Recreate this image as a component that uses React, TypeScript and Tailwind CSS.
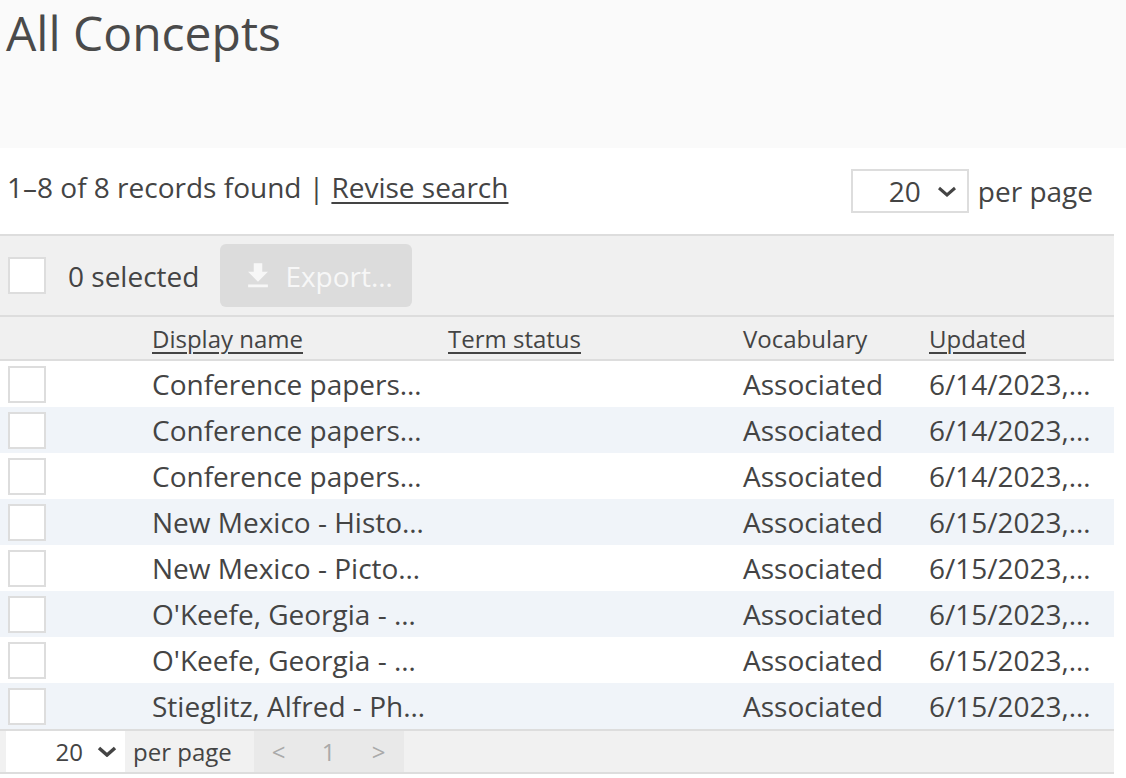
type Concept = {
  name: string;
  vocabulary: string;
  updated: string;
};

const concepts: Concept[] = [
  { name: "Conference papers…", vocabulary: "Associated", updated: "6/14/2023,…" },
  { name: "Conference papers…", vocabulary: "Associated", updated: "6/14/2023,…" },
  { name: "Conference papers…", vocabulary: "Associated", updated: "6/14/2023,…" },
  { name: "New Mexico - Histo…", vocabulary: "Associated", updated: "6/15/2023,…" },
  { name: "New Mexico - Picto…", vocabulary: "Associated", updated: "6/15/2023,…" },
  { name: "O'Keefe, Georgia - …", vocabulary: "Associated", updated: "6/15/2023,…" },
  { name: "O'Keefe, Georgia - …", vocabulary: "Associated", updated: "6/15/2023,…" },
  { name: "Stieglitz, Alfred - Ph…", vocabulary: "Associated", updated: "6/15/2023,…" },
];

function Checkbox() {
  return <div className="h-[37px] w-[38px] border-2 border-[#dddddd] bg-white" />;
}

function Chevron({ className }: { className: string }) {
  return (
    <svg viewBox="0 0 20 11" className={className} fill="none" stroke="currentColor" strokeWidth={3}>
      <polyline points="2,2 10,9 18,2" />
    </svg>
  );
}

function DownloadIcon() {
  return (
    <svg viewBox="0 0 24 24" className="h-[34px] w-[34px]" fill="currentColor">
      <path d="M19 9h-4V3H9v6H5l7 7 7-7zM5 18v2h14v-2H5z" />
    </svg>
  );
}

function SearchSummary() {
  return (
    <div className="flex h-[86px] items-center justify-between pl-[7px] pr-[21px]">
      <p className="mb-[8px] text-[28px] leading-[38px]">
        1–8 of 8 records found |{" "}
        <a className="underline decoration-2 underline-offset-[4px]">Revise search</a>
      </p>
      <div className="flex items-center gap-[9px]">
        <div className="flex h-[44px] w-[118px] items-center justify-end gap-[16px] border-2 border-[#dddddd] bg-white pr-[10px]">
          <span className="text-[28px] leading-none">20</span>
          <Chevron className="h-[11px] w-[20px]" />
        </div>
        <span className="text-[28px] leading-[38px]">per page</span>
      </div>
    </div>
  );
}

function Toolbar() {
  return (
    <div className="flex h-[83px] items-center border-y-2 border-[#dddddd] bg-[#f0f0f0] pl-[8px]">
      <Checkbox />
      <span className="ml-[22px] text-[28px] leading-[38px]">0 selected</span>
      <button
        type="button"
        disabled
        className="ml-[21px] flex h-[63px] w-[192px] items-center rounded-[6px] bg-[#dcdcdc] pl-[21px] text-[#f7f7f7]"
      >
        <DownloadIcon />
        <span className="ml-[10px] text-[28px] leading-[38px]">Export…</span>
      </button>
    </div>
  );
}

const gridCols = "grid grid-cols-[152px_296px_295px_186px_1fr]";

function HeaderRow() {
  return (
    <div className={`${gridCols} h-[44px] items-center border-b-2 border-[#dddddd] bg-[#f0f0f0] text-[24px] leading-[33px]`}>
      <div />
      <span className="underline decoration-2 underline-offset-[4px]">Display name</span>
      <span className="underline decoration-2 underline-offset-[4px]">Term status</span>
      <span>Vocabulary</span>
      <span className="underline decoration-2 underline-offset-[4px]">Updated</span>
    </div>
  );
}

function ConceptRow({ concept, striped }: { concept: Concept; striped: boolean }) {
  return (
    <div
      className={`${gridCols} h-[46px] items-center text-[28px] leading-[38px] ${
        striped ? "bg-[#f0f4f9]" : "bg-white"
      }`}
    >
      <div className="pl-[8px]">
        <Checkbox />
      </div>
      <span className="whitespace-nowrap">{concept.name}</span>
      <span />
      <span>{concept.vocabulary}</span>
      <span className="whitespace-nowrap">{concept.updated}</span>
    </div>
  );
}

function Footer() {
  return (
    <div className="flex h-[45px] border-y-2 border-[#dddddd] bg-[#f1f1f1] pl-[6px] text-[24px] leading-[33px]">
      <div className="flex w-[119px] items-center justify-end gap-[13px] bg-white pr-[7px]">
        <span>20</span>
        <Chevron className="h-[11px] w-[22px] stroke-[3.5]" />
      </div>
      <span className="ml-[8px] flex items-center">per page</span>
      <div className="ml-[22px] flex bg-[#e9e9e9] text-[#aaaaaa]">
        <span className="flex w-[50px] items-center justify-center">&lt;</span>
        <span className="flex w-[50px] items-center justify-center">1</span>
        <span className="flex w-[50px] items-center justify-center">&gt;</span>
      </div>
    </div>
  );
}

export default function App() {
  return (
    <div className="h-[778px] w-full bg-white font-['Open_Sans',sans-serif] text-[#444444]">
      <header className="h-[148px] bg-[#fafafa] pl-[6px]">
        <h1 className="text-[48px] leading-[65px] text-[#4a4a4a]">All Concepts</h1>
      </header>
      <div className="w-[1114px]">
        <SearchSummary />
        <Toolbar />
        <HeaderRow />
        {concepts.map((concept, i) => (
          <ConceptRow key={i} concept={concept} striped={i % 2 === 1} />
        ))}
        <Footer />
      </div>
    </div>
  );
}
